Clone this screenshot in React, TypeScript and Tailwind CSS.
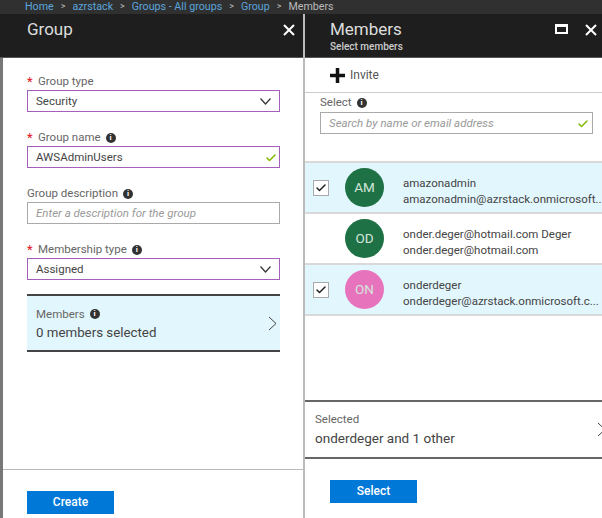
import { Check } from "lucide-react";

const font = { fontFamily: 'Roboto, "Noto Sans", sans-serif' };

function InfoDot() {
  return (
    <span className="ml-[5px] inline-flex h-[10px] w-[10px] items-center justify-center rounded-full bg-[#333] text-[8px] font-bold not-italic leading-none text-white">
      i
    </span>
  );
}

function Close() {
  return (
    <svg width="12" height="12" viewBox="0 0 12 12" className="shrink-0 text-white">
      <path d="M1 1 L11 11 M11 1 L1 11" stroke="currentColor" strokeWidth="2" fill="none" />
    </svg>
  );
}

function Caret({ className }: { className?: string }) {
  return (
    <svg width="9" height="15" viewBox="0 0 9 15" className={`shrink-0 text-[#444] ${className ?? ""}`}>
      <path d="M1 1 L8 7.5 L1 14" stroke="currentColor" strokeWidth="1" fill="none" />
    </svg>
  );
}

function Label({ text, required, info }: { text: string; required?: boolean; info?: boolean }) {
  return (
    <div className="relative flex h-[17px] items-center pl-[11px] text-[11.5px] text-[#666]">
      {required && <span className="absolute left-0 top-[-1px] text-[13px] text-[#e81123]">*</span>}
      <span className={required ? "" : "ml-[-11px]"}>{text}</span>
      {info && <InfoDot />}
    </div>
  );
}

function Field({ value, kind, placeholder }: { value?: string; kind?: "select" | "ok"; placeholder?: boolean }) {
  return (
    <div
      className={`flex h-[22px] w-[253px] items-center justify-between border pl-[8px] pr-[8px] pt-[1px] text-[11.5px] ${
        placeholder ? "border-[#aaa] italic text-[#999]" : "border-[#a45fb8] text-[#444]"
      }`}
    >
      <span>{value}</span>
      {kind === "select" && (
        <svg width="11" height="7" viewBox="0 0 11 7" className="text-[#333]">
          <path d="M0.5 0.5 L5.5 6 L10.5 0.5" stroke="currentColor" strokeWidth="1.2" fill="none" />
        </svg>
      )}
      {kind === "ok" && <Check size={12} strokeWidth={3} className="mr-[-6px] text-[#7fba00]" />}
    </div>
  );
}

function Person(props: { initials: string; name: string; email: string; color: string; checked?: boolean }) {
  return (
    <div className={`flex h-[51px] items-center border-b-2 border-[#d9d9d9] ${props.checked ? "bg-[#e2f6fd]" : "bg-white"}`}>
      <div className="w-[40px] shrink-0 pl-[8px]">
        {props.checked && (
          <div className="flex h-[16px] w-[16px] items-center justify-center border border-[#aaa] bg-white">
            <Check size={12} strokeWidth={3} className="text-[#222]" />
          </div>
        )}
      </div>
      <div
        className={`flex h-[39px] w-[39px] shrink-0 items-center justify-center rounded-full text-[13.5px] text-[#d5e5dc] ${props.color}`}
      >
        {props.initials}
      </div>
      <div className="ml-[19px] whitespace-nowrap pt-[8px] text-[11.5px] leading-[15.5px] text-[#444]">
        <div>{props.name}</div>
        <div>{props.email}</div>
      </div>
    </div>
  );
}

export default function App() {
  return (
    <div className="flex h-[518px] w-[602px] flex-col overflow-hidden bg-white" style={font}>
      <div className="flex h-[14px] items-center gap-[7px] bg-[#303030] pl-[25px] text-[10.7px] text-[#bbb]">
        <span className="text-[#5aa5dc]">Home</span>
        <span className="text-[9px]">&gt;</span>
        <span className="text-[#5aa5dc]">azrstack</span>
        <span className="text-[9px]">&gt;</span>
        <span className="text-[#5aa5dc]">Groups - All groups</span>
        <span className="text-[9px]">&gt;</span>
        <span className="text-[#5aa5dc]">Group</span>
        <span className="text-[9px]">&gt;</span>
        <span>Members</span>
      </div>

      <div className="flex min-h-0 flex-1">
        {/* Group blade */}
        <div className="flex w-[305px] flex-col border-r-2 border-[#bbb]">
          <div className="flex h-[44px] items-start justify-between border-b border-[#555] bg-[#1e1e1e] pl-[27px] pr-[8px] pt-[3px]">
            <span className="text-[17px] text-[#ddd]">Group</span>
            <div className="mt-[7px]">
              <Close />
            </div>
          </div>
          <div className="flex min-h-0 flex-1 flex-col border-l-[3px] border-[#777]">
            <div className="flex flex-1 flex-col pl-[24px] pt-[15px]">
              <Label text="Group type" required />
              <Field value="Security" kind="select" />
              <div className="h-[17px]" />
              <Label text="Group name" required info />
              <Field value="AWSAdminUsers" kind="ok" />
              <div className="h-[17px]" />
              <Label text="Group description" info />
              <Field placeholder value="Enter a description for the group" />
              <div className="h-[17px]" />
              <Label text="Membership type" required info />
              <Field value="Assigned" kind="select" />
              <div className="mt-[14px] flex h-[58px] w-[253px] items-center justify-between border-y-2 border-[#444] bg-[#e2f6fd] pl-[9px] pr-[3px]">
                <div>
                  <div className="flex items-center text-[11.5px] leading-[18px] text-[#666]">
                    Members
                    <InfoDot />
                  </div>
                  <div className="text-[13.3px] leading-[19px] text-[#444]">0 members selected</div>
                </div>
                <Caret />
              </div>
            </div>
            <div className="h-[49px] border-t border-[#bbb] pl-[24px] pt-[19px]">
              <button className="h-[23px] w-[87px] bg-[#0078d7] text-[12px] font-medium text-white">Create</button>
            </div>
          </div>
        </div>

        {/* Members blade */}
        <div className="flex min-w-0 flex-1 flex-col">
          <div className="flex h-[44px] justify-between border-b border-[#555] bg-[#1e1e1e] pl-[25px] pr-[5px] pt-[3px]">
            <div>
              <div className="text-[17px] leading-[24px] text-[#ddd]">Members</div>
              <div className="text-[10px] font-medium leading-[12px] text-[#ccc]">Select members</div>
            </div>
            <div className="mt-[7px] flex items-start gap-[17px]">
              <div className="h-[10px] w-[13px] border-[2px] border-t-[3px] border-white" />
              <Close />
            </div>
          </div>
          <div className="flex h-[35px] shrink-0 items-center border-b border-[#ccc] pl-[25px] text-[12px] text-[#555]">
            <svg width="15" height="15" viewBox="0 0 15 15" className="mr-[5px] text-[#111]">
              <path d="M7.5 0 V15 M0 7.5 H15" stroke="currentColor" strokeWidth="3.5" fill="none" />
            </svg>
            Invite
          </div>
          <div className="px-[15px] pt-[1px]">
            <div className="flex h-[18px] items-center text-[11.5px] text-[#666]">
              Select
              <InfoDot />
            </div>
            <div className="flex h-[22px] w-[273px] items-center justify-between border border-[#aaa] pl-[8px] pr-[3px] pt-[1px] text-[11.5px] italic text-[#999]">
              Search by name or email address
              <Check size={12} strokeWidth={3} className="text-[#7fba00]" />
            </div>
          </div>
          <div className="mt-[27px] border-t-2 border-[#d9d9d9]">
            <Person checked initials="AM" color="bg-[#1e7145]" name="amazonadmin" email="amazonadmin@azrstack.onmicrosoft.." />
            <Person initials="OD" color="bg-[#1e7145]" name="onder.deger@hotmail.com Deger" email="onder.deger@hotmail.com" />
            <Person checked initials="ON" color="bg-[#e773bd]" name="onderdeger" email="onderdeger@azrstack.onmicrosoft.c..." />
          </div>
          <div className="mt-[84px] flex h-[59px] shrink-0 items-center justify-between border-y-2 border-[#666] pl-[10px]">
            <div>
              <div className="text-[11.5px] text-[#666]">Selected</div>
              <div className="text-[13.5px] text-[#444]">onderdeger and 1 other</div>
            </div>
            <Caret className="mr-[-4px]" />
          </div>
          <div className="pl-[25px] pt-[19px]">
            <button className="h-[23px] w-[87px] bg-[#0078d7] text-[12px] font-medium text-white">Select</button>
          </div>
        </div>
      </div>
    </div>
  );
}
